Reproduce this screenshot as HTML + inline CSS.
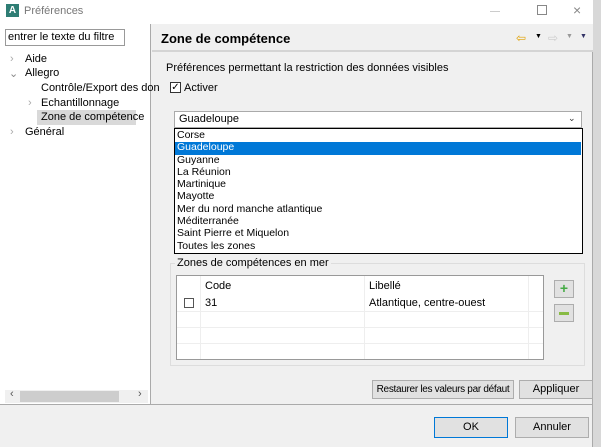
<!DOCTYPE html>
<html><head><style>
*{box-sizing:border-box;margin:0;padding:0}
body{width:601px;height:447px;position:relative;background:#fff;font-family:"Liberation Sans",sans-serif;font-size:11px;color:#000;overflow:hidden}
.a{position:absolute;white-space:nowrap}
.btn{position:absolute;background:#e1e1e1;border:1px solid #adadad;text-align:center;line-height:17px;font-size:11px;white-space:nowrap;overflow:hidden}
</style></head><body>
<div class="a" style="left:593px;top:0;width:8px;height:447px;background:#d8d8d8"></div>
<div class="a" style="left:0;top:0;width:593px;height:447px;background:#f0f0f0;border-right:1px solid #aaa"></div>
<div class="a" style="left:0;top:0;width:593px;height:24px;background:#fff"></div>
<div class="a" style="left:6px;top:4px;width:13px;height:13px;background:#2e7d74;color:#fff;font-size:10px;font-weight:bold;text-align:center;line-height:13px">A</div>
<div class="a" style="left:24px;top:5px;color:#777;font-size:11px">Préférences</div>
<div class="a" style="left:490px;top:11px;width:10px;height:1px;background:#ccc"></div>
<div class="a" style="left:537px;top:5px;width:10px;height:10px;border:1px solid #888"></div>
<div class="a" style="left:573px;top:2px;font-size:14px;color:#888">×</div>
<div class="a" style="left:0;top:24px;width:151px;height:380px;background:#fff;border-right:1px solid #aaa"></div>
<div class="a" style="left:5px;top:29px;width:120px;height:17px;border:1px solid #999;background:#fff;padding-left:2px;line-height:15px">entrer le texte du filtre</div>
<div class="a" style="left:10px;top:53px;color:#aaa">›</div><div class="a" style="left:25px;top:53px">Aide</div>
<div class="a" style="left:9px;top:67px;color:#888">⌄</div><div class="a" style="left:25px;top:67px">Allegro</div>
<div class="a" style="left:41px;top:82px">Contrôle/Export des don</div>
<div class="a" style="left:28px;top:97px;color:#aaa">›</div><div class="a" style="left:41px;top:97px">Echantillonnage</div>
<div class="a" style="left:37px;top:110px;width:99px;height:15px;background:#d9d9d9"></div>
<div class="a" style="left:41px;top:111px">Zone de compétence</div>
<div class="a" style="left:10px;top:126px;color:#aaa">›</div><div class="a" style="left:25px;top:126px">Général</div>
<div class="a" style="left:5px;top:390px;width:143px;height:13px;background:#f0f0f0"></div>
<div class="a" style="left:20px;top:391px;width:99px;height:11px;background:#cdcdcd"></div>
<div class="a" style="left:10px;top:388px;font-size:11px;color:#555">‹</div>
<div class="a" style="left:138px;top:388px;font-size:11px;color:#555">›</div>
<div class="a" style="left:152px;top:24px;width:441px;height:28px;background:#f0f0f0;border-bottom:2px solid #d4d4d4"></div>
<div class="a" style="left:161px;top:31px;font-size:13px;font-weight:bold">Zone de compétence</div>
<div class="a" style="left:516px;top:31px;color:#e0a000;font-size:12px">⇦</div>
<div class="a" style="left:535px;top:33px;font-size:7px">▼</div>
<div class="a" style="left:548px;top:31px;color:#ccc;font-size:12px">⇨</div>
<div class="a" style="left:566px;top:33px;font-size:7px;color:#999">▼</div>
<div class="a" style="left:580px;top:33px;font-size:7px;color:#336">▼</div>
<div class="a" style="left:166px;top:62px">Préférences permettant la restriction des données visibles</div>
<div class="a" style="left:170px;top:82px;width:11px;height:11px;border:1px solid #333;background:#fff;font-size:10px;line-height:9px;text-align:center">✓</div>
<div class="a" style="left:184px;top:82px">Activer</div>
<div class="a" style="left:170px;top:263px;width:415px;height:103px;border:1px solid #ddd"></div>
<div class="a" style="left:175px;top:257px;background:#f0f0f0;padding:0 2px">Zones de compétences en mer</div>
<div class="a" style="left:176px;top:275px;width:368px;height:85px;background:#fff;border:1px solid #999"></div>
<div class="a" style="left:200px;top:276px;width:1px;height:83px;background:#eee"></div>
<div class="a" style="left:364px;top:276px;width:1px;height:83px;background:#eee"></div>
<div class="a" style="left:528px;top:276px;width:1px;height:83px;background:#eee"></div>
<div class="a" style="left:177px;top:311px;width:366px;height:1px;background:#eee"></div>
<div class="a" style="left:177px;top:327px;width:366px;height:1px;background:#eee"></div>
<div class="a" style="left:177px;top:343px;width:366px;height:1px;background:#eee"></div>
<div class="a" style="left:205px;top:280px">Code</div>
<div class="a" style="left:369px;top:280px">Libellé</div>
<div class="a" style="left:184px;top:298px;width:10px;height:10px;border:1px solid #555"></div>
<div class="a" style="left:205px;top:297px">31</div>
<div class="a" style="left:369px;top:297px">Atlantique, centre-ouest</div>
<div class="btn" style="left:554px;top:280px;width:20px;height:18px;color:#4a4;font-weight:bold;font-size:14px;line-height:15px">+</div>
<div class="btn" style="left:554px;top:304px;width:20px;height:18px"><div class="a" style="left:4px;top:7px;width:10px;height:3px;background:#8b4"></div></div>
<div class="btn" style="left:372px;top:380px;width:142px;height:19px;font-size:10px;letter-spacing:-0.3px">Restaurer les valeurs par défaut</div>
<div class="btn" style="left:519px;top:380px;width:74px;height:19px">Appliquer</div>
<div class="a" style="left:0;top:404px;width:593px;height:1px;background:#aaa"></div>
<div class="btn" style="left:434px;top:417px;width:74px;height:21px;border:1px solid #0078d7;line-height:19px">OK</div>
<div class="btn" style="left:515px;top:417px;width:74px;height:21px;line-height:19px">Annuler</div>
<div class="a" style="left:174px;top:111px;width:408px;height:17px;background:#fff;border:1px solid #aaa;padding-left:4px;line-height:15px">Guadeloupe</div>
<div class="a" style="left:568px;top:113px;font-size:9px;color:#333">⌄</div>
<div class="a" style="left:174px;top:128px;width:409px;height:126px;background:#fff;border:1px solid #000"></div>
<div class="a" style="left:175px;top:142px;width:406px;height:13px;background:#0078d7"></div>
<div class="a" style="left:177px;top:129px;line-height:12.3px;font-size:10.5px">Corse<br><span style="color:#fff">Guadeloupe</span><br>Guyanne<br>La Réunion<br>Martinique<br>Mayotte<br>Mer du nord manche atlantique<br>Méditerranée<br>Saint Pierre et Miquelon<br>Toutes les zones</div>
</body></html>
